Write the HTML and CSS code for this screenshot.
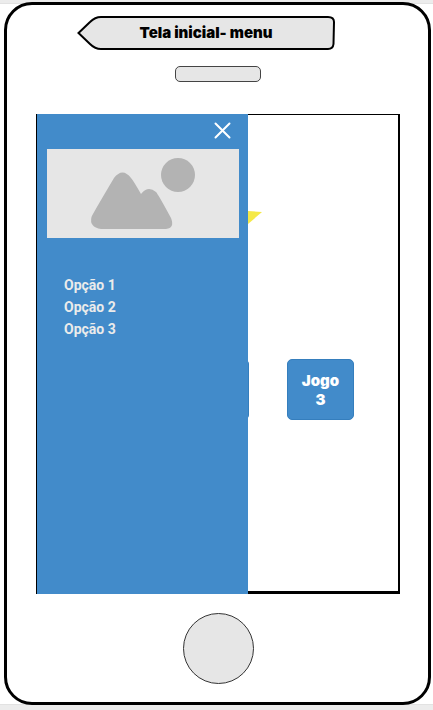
FILE: index.html
```html
<!DOCTYPE html>
<html lang="pt-BR">
<head>
<meta charset="utf-8">
<meta name="viewport" content="width=device-width, initial-scale=1">
<title>Tela inicial - menu</title>
<link rel="stylesheet" href="styles.css">
</head>
<body>
<div class="phone">
  <header class="tag">
    <svg class="tag-shape" viewBox="0 0 258 34" preserveAspectRatio="none" aria-hidden="true">
      <path d="M1.5 17 L13 6 Q18 1 24 1 H251 Q257 1 257 6 L256.500 28 Q256 33 251 33 H24 Q18 33 13 28 Z"/>
    </svg>
    <h1 class="title">Tela inicial- menu</h1>
  </header>
  <div class="speaker"></div>
  <div class="screen">
    <main class="home-view">
      <svg class="star" viewBox="0 0 28 16" aria-hidden="true"><path d="M0 1 L14 1 L28 2 L14 14 L0 15 Z"/></svg>
      <div class="games">
        <button class="game" type="button" aria-label="Jogo 2"></button>
        <button class="game" type="button">Jogo 3</button>
      </div>
    </main>
    <aside class="drawer">
      <button class="close" type="button" aria-label="Fechar">
        <svg viewBox="0 0 17 17" aria-hidden="true"><path d="M1.5 1.5 L15.5 15.5 M15.5 1.5 L1.5 15.5"/></svg>
      </button>
      <svg class="picture" viewBox="0 0 192 89" role="img" aria-label="Imagem">
        <circle cx="131" cy="26" r="17"/>
        <path d="M67 29 Q75.500 18 84 29 Q86 31 94 45 Q101 36 109 43 Q111 45 124 69 Q128 79 119 80 H54 Q42 78 44.500 68 Q45 66 67 29 Z"/>
      </svg>
      <nav class="menu">
        <a href="#opcao-1">Opção 1</a>
        <a href="#opcao-2">Opção 2</a>
        <a href="#opcao-3">Opção 3</a>
      </nav>
    </aside>
  </div>
  <button class="home-button" type="button" aria-label="Início"></button>
</div>
</body>
</html>
```
FILE: styles.css
```css
* {
  box-sizing: border-box;
}

body {
  margin: 0;
  min-height: 100vh;
  padding: 2px 2px 5px 4px;
  display: flex;
  background: linear-gradient(#ececec 3px, #e2e2e2 3px, #e2e2e2 4px, #fff 4px, #fff calc(100% - 6px), #e2e2e2 calc(100% - 6px), #e2e2e2 calc(100% - 5px), #ececec calc(100% - 5px));
}

.phone {
  flex: 1;
  display: flex;
  flex-direction: column;
  align-items: center;
  padding: 11px 28px 18px 29px;
  border: 3px solid #000;
  border-radius: 28px;
  background: #fff;
}

.tag {
  position: relative;
  width: 258px;
  height: 34px;
  margin-right: 24px;
  display: flex;
  align-items: center;
  justify-content: center;
}

.tag-shape {
  position: absolute;
  inset: 0;
  width: 100%;
  height: 100%;
  fill: #e6e6e6;
  stroke: #000;
  stroke-width: 2;
}

.title {
  position: relative;
  margin: 0;
  font: 900 15px/20px Inter, sans-serif;
}

.speaker {
  width: 86px;
  height: 16px;
  margin: 16px 0 32px;
  border: 1px solid #444;
  border-radius: 5px;
  background: #e6e6e6;
}

.screen {
  position: relative;
  flex: 1;
  align-self: stretch;
  display: flex;
  border: solid #000;
  border-width: 1px 2px 3px;
}

.home-view {
  flex: 1;
  display: flex;
  flex-direction: column;
  align-items: flex-end;
  padding: 95px 44px 0 0;
}

.star {
  width: 28px;
  height: 16px;
  margin-right: 92px;
  fill: #f5e947;
}

.games {
  display: flex;
  gap: 38px;
  margin-top: 133px;
}

.game {
  width: 67px;
  height: 61px;
  padding: 0 8px;
  border: 1px solid #357ebd;
  border-radius: 5px;
  background: #428bca;
  color: #fff;
  font: 900 15px/19px Inter, sans-serif;
}

.drawer {
  position: absolute;
  top: -1px;
  bottom: -3px;
  left: -1px;
  width: 211px;
  display: flex;
  flex-direction: column;
  padding: 8px 9px 0 10px;
  background: #428bca;
}

.close {
  align-self: flex-end;
  width: 17px;
  height: 17px;
  margin-right: 8px;
  padding: 0;
  border: 0;
  background: none;
}

.close svg {
  display: block;
  fill: none;
  stroke: #fff;
  stroke-width: 2;
  stroke-linecap: round;
}

.picture {
  width: 192px;
  height: 89px;
  margin-top: 10px;
  background: #e6e6e6;
  fill: #b3b3b3;
}

.menu {
  display: flex;
  flex-direction: column;
  align-items: flex-start;
  margin: 36px 0 0 17px;
}

.menu a {
  color: #ebebeb;
  font: 700 14px/22px Roboto, sans-serif;
  text-decoration: none;
}

.home-button {
  width: 71px;
  height: 71px;
  margin-top: 19px;
  padding: 0;
  border: 1px solid #333;
  border-radius: 50%;
  background: #e6e6e6;
}
```
